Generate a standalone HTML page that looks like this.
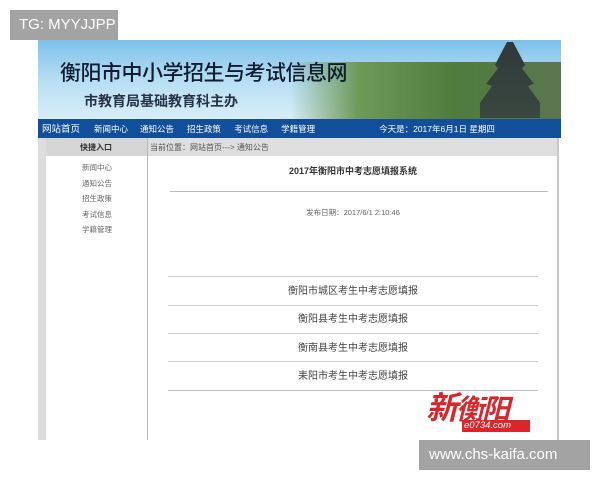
<!DOCTYPE html>
<html><head><meta charset="utf-8"><style>
*{margin:0;padding:0;box-sizing:border-box}
body{width:600px;height:480px;background:#fff;position:relative;overflow:hidden;font-family:"Liberation Sans","Noto Sans CJK SC",sans-serif}
.a{position:absolute}
.cj{font-family:"Liberation Sans","Noto Sans CJK SC",sans-serif}
</style></head><body>
<div class="a" style="left:10px;top:10px;width:108px;height:30px;background:#a3a3a3;color:#fff;font-size:15px;line-height:30px;padding-left:9px">TG: MYYJJPP</div>
<div class="a" style="left:38px;top:40px;width:523px;height:80px;background:linear-gradient(180deg,#7cc1ea 0%,#b6def3 50%,#d9eef8 100%)"></div>
<div class="a" style="left:290px;top:62px;width:271px;height:58px;background:linear-gradient(90deg,rgba(120,160,110,0) 0%,#6f9a5a 25%,#4f7d3e 60%,#5a7650 100%)"></div>
<div class="a" style="left:480px;top:42px;width:60px;height:76px;background:linear-gradient(180deg,#2e3a3a,#3a4840);clip-path:polygon(45% 0,55% 0,75% 30%,70% 35%,90% 55%,80% 58%,100% 80%,100% 100%,0 100%,0 80%,20% 58%,10% 55%,30% 35%,25% 30%)"></div>
<div class="a cj" style="left:60px;top:57px;font-size:21px;color:#111c33;letter-spacing:-0.5px;font-weight:500">衡阳市中小学招生与考试信息网</div>
<div class="a cj" style="left:84px;top:91px;font-size:14px;color:#25324a;font-weight:bold">市教育局基础教育科主办</div>
<div class="a" style="left:38px;top:119px;width:523px;height:19px;background:#124f9b"></div>
<div class="a cj" style="left:42px;top:122px;font-size:8.5px;color:#fff;white-space:nowrap;line-height:14px">
<span style="font-size:9.5px">网站首页</span><span style="margin-left:14px">新闻中心</span><span style="margin-left:12px">通知公告</span><span style="margin-left:13px">招生政策</span><span style="margin-left:13px">考试信息</span><span style="margin-left:13px">学籍管理</span><span style="margin-left:64px">今天是：2017年6月1日 星期四</span></div>
<div class="a" style="left:38px;top:138px;width:8px;height:302px;background:#dcdcdc"></div>
<div class="a" style="left:46px;top:138px;width:102px;height:18px;background:#d6d6d6"></div>
<div class="a" style="left:148px;top:138px;width:410px;height:18px;background:#dedede"></div>
<div class="a" style="left:147px;top:138px;width:1px;height:302px;background:#b8b8b8"></div>
<div class="a" style="left:557px;top:138px;width:2px;height:302px;background:#c8c8c8"></div>
<div class="a cj" style="left:80px;top:142px;font-size:8px;color:#333;font-weight:bold">快捷入口</div>
<div class="a cj" style="left:150px;top:142px;font-size:8px;color:#555">当前位置：网站首页---&gt; 通知公告</div>
<div class="a cj" style="left:82px;top:160px;font-size:7.5px;color:#666;line-height:15.5px">新闻中心<br>通知公告<br>招生政策<br>考试信息<br>学籍管理</div>
<div class="a cj" style="left:148px;top:164px;width:410px;text-align:center;font-size:9px;font-weight:bold;color:#333">2017年衡阳市中考志愿填报系统</div>
<div class="a" style="left:170px;top:191px;width:378px;height:1px;background:#bbb"></div>
<div class="a cj" style="left:148px;top:207px;width:410px;text-align:center;font-size:7.5px;color:#666">发布日期：2017/6/1 2:10:46</div>
<div class="a" style="left:168px;top:276px;width:370px;height:1px;background:#ccc"></div>
<div class="a" style="left:168px;top:305px;width:370px;height:1px;background:#ccc"></div>
<div class="a" style="left:168px;top:333px;width:370px;height:1px;background:#ccc"></div>
<div class="a" style="left:168px;top:361px;width:370px;height:1px;background:#ccc"></div>
<div class="a" style="left:168px;top:390px;width:370px;height:1px;background:#bbb"></div>
<div class="a cj" style="left:168px;top:278px;width:370px;text-align:center;font-size:10px;color:#444;line-height:28.3px">衡阳市城区考生中考志愿填报<br>衡阳县考生中考志愿填报<br>衡南县考生中考志愿填报<br>耒阳市考生中考志愿填报</div>
<div class="a cj" style="left:426px;top:389px;font-size:32px;font-weight:bold;font-style:italic;color:#d8262b;line-height:38px;letter-spacing:-2px">新<span style="font-size:28px">衡阳</span></div>
<div class="a" style="left:462px;top:420px;width:68px;height:12px;background:#d8262b;color:#fff;font-size:9.5px;font-style:italic;line-height:12px;padding-left:2px">e0734.com</div>
<div class="a" style="left:419px;top:440px;width:171px;height:30px;background:#a3a3a3;color:#fff;font-size:15px;line-height:30px;padding-left:10px">www.chs-kaifa.com</div>
</body></html>
